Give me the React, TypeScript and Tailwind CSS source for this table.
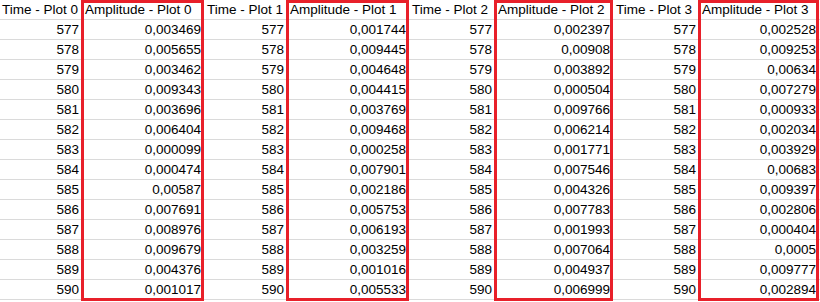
const times = [577, 578, 579, 580, 581, 582, 583, 584, 585, 586, 587, 588, 589, 590];

const plots = [
  {
    name: "Plot 0",
    amps: ["0,003469", "0,005655", "0,003462", "0,009343", "0,003696", "0,006404", "0,000099", "0,000474", "0,00587", "0,007691", "0,008976", "0,009679", "0,004376", "0,001017"],
  },
  {
    name: "Plot 1",
    amps: ["0,001744", "0,009445", "0,004648", "0,004415", "0,003769", "0,009468", "0,000258", "0,007901", "0,002186", "0,005753", "0,006193", "0,003259", "0,001016", "0,005533"],
  },
  {
    name: "Plot 2",
    amps: ["0,002397", "0,00908", "0,003892", "0,000504", "0,009766", "0,006214", "0,001771", "0,007546", "0,004326", "0,007783", "0,001993", "0,007064", "0,004937", "0,006999"],
  },
  {
    name: "Plot 3",
    amps: ["0,002528", "0,009253", "0,00634", "0,007279", "0,000933", "0,002034", "0,003929", "0,00683", "0,009397", "0,002806", "0,000404", "0,0005", "0,009777", "0,002894"],
  },
];

// column widths in px: [time, amplitude] per plot
const widths = [
  ["w-[81px]", "w-[124px]"],
  ["w-[81px]", "w-[124px]"],
  ["w-[84px]", "w-[120px]"],
  ["w-[84px]", "w-[122px]"],
];

const cell = "h-[20px] border-b border-[#dadada] leading-[19px] whitespace-nowrap overflow-visible";

const App = () => {
  return (
    <main
      className="flex w-[820px] h-[302px] bg-white text-black text-[13.5px] overflow-hidden"
      style={{ fontFamily: '"Liberation Sans", Arial, sans-serif' }}
    >
      {plots.map((plot, i) => (
        <div key={plot.name} className="flex">
          {/* Time column */}
          <div className={`${widths[i][0]} flex flex-col`}>
            <div className={`${cell} pl-[2px] text-left`}>Time - {plot.name}</div>
            {times.map((t) => (
              <div key={t} className={`${cell} pr-[2px] text-right`}>
                {t}
              </div>
            ))}
          </div>

          {/* Amplitude column with red highlight */}
          <div className={`${widths[i][1]} relative flex flex-col`}>
            <div className={`${cell} pl-[4px] text-left`}>Amplitude - {plot.name}</div>
            {plot.amps.map((a, r) => (
              <div key={r} className={`${cell} pr-[4px] text-right`}>
                {a}
              </div>
            ))}
            <div className="absolute left-0 right-[1px] top-0 h-[301px] border-[3px] border-[#e8202a] pointer-events-none" />
          </div>
        </div>
      ))}
    </main>
  );
};

export default App;
